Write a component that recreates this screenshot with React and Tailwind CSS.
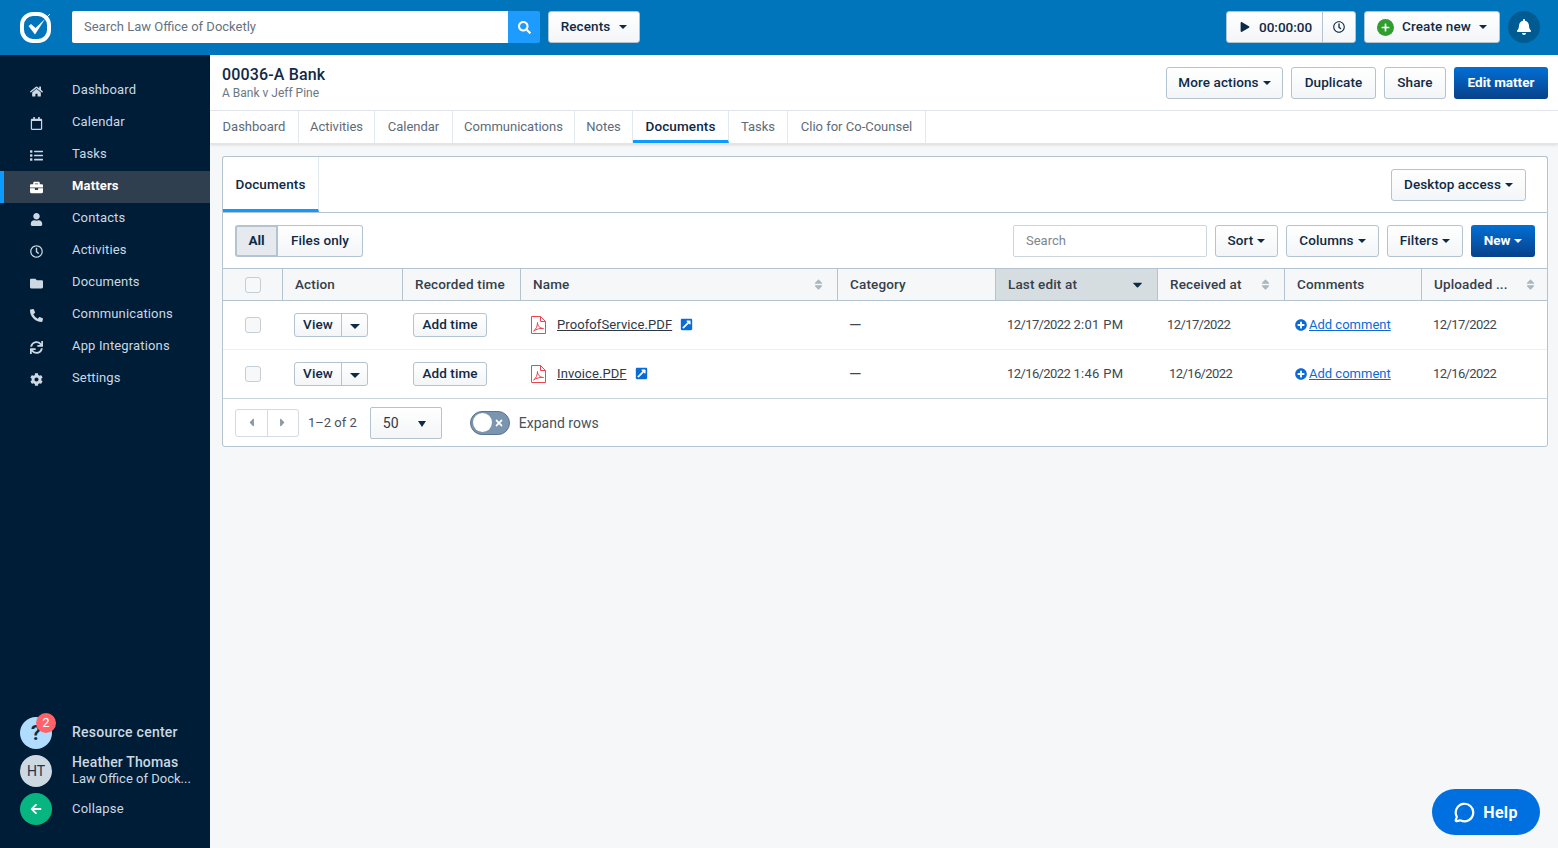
import React from 'react';
import {
  FaHome, FaRegCalendar, FaList, FaBriefcase, FaUser, FaRegClock, FaFolder, FaPhoneAlt, FaSync, FaCog,
  FaSearch, FaBell, FaPlay, FaPlus, FaArrowLeft, FaPlusCircle, FaExternalLinkSquareAlt, FaTimes,
  FaCaretLeft, FaCaretRight, FaCaretDown, FaSort,
} from 'react-icons/fa';
import { MessageCircle } from 'lucide-react';

const navItems = [
  { label: 'Dashboard', icon: FaHome },
  { label: 'Calendar', icon: FaRegCalendar },
  { label: 'Tasks', icon: FaList },
  { label: 'Matters', icon: FaBriefcase, active: true },
  { label: 'Contacts', icon: FaUser },
  { label: 'Activities', icon: FaRegClock },
  { label: 'Documents', icon: FaFolder },
  { label: 'Communications', icon: FaPhoneAlt },
  { label: 'App Integrations', icon: FaSync },
  { label: 'Settings', icon: FaCog },
];

const tabs = [
  { label: 'Dashboard', width: 'w-[89px]' },
  { label: 'Activities', width: 'w-[76px]' },
  { label: 'Calendar', width: 'w-[78px]' },
  { label: 'Communications', width: 'w-[122px]' },
  { label: 'Notes', width: 'w-[58px]' },
  { label: 'Documents', width: 'w-[96px]' },
  { label: 'Tasks', width: 'w-[59px]' },
  { label: 'Clio for Co-Counsel', width: 'w-[138px]' },
];

const rows = [
  { file: 'ProofofService.PDF', day: '12/17/2022', time: '2:01 PM', receivedPad: 'pl-[9px]' },
  { file: 'Invoice.PDF', day: '12/16/2022', time: '1:46 PM', receivedPad: 'pl-[11px]' },
];

const gridCols = 'grid grid-cols-[60px_120px_118px_317px_158px_162px_127px_137px_1fr]';
const btn = 'flex items-center justify-center rounded-[3px] border border-[#b3c3cf] bg-gradient-to-b from-white to-[#f3f5f7] pb-[2px] text-[13.5px] tracking-[0.1px] text-[#0f2a45] font-medium';
const primaryBtn = 'flex items-center justify-center rounded-[3px] bg-gradient-to-b from-[#0070d6] to-[#07418a] pb-[2px] text-[13.5px] text-white font-bold';

const Caret = ({ className = 'border-x-[4px] border-t-[4px]' }) => (
  <span className={`mt-[2px] inline-block h-0 w-0 border-x-transparent border-t-current ${className}`} />
);

const HeaderCell = ({ children, sort, active, className = '' }) => (
  <div className={`flex items-center justify-between border-r border-[#b3c3cf] px-3 text-[13.5px] font-medium tracking-[0.15px] text-[#35404a] last:border-r-0 ${active ? 'bg-[#d5dde1]' : ''} ${className}`}>
    <span className="pb-[2px]">{children}</span>
    {sort && <FaSort className="text-[13px] text-[#a9b7c0]" />}
    {active && <FaCaretDown className="text-[15px] text-[#0f2a45]" />}
  </div>
);

const Checkbox = () => (
  <span className="block h-4 w-4 rounded-[3px] border border-[#c3ced6] bg-[#f6f8f9]" />
);

const PdfIcon = () => (
  <svg width="15" height="18" viewBox="0 0 15 18" fill="none" stroke="#f0444f" strokeWidth="1" className="shrink-0">
    <path d="M0.5 0.5 H9.5 L14.5 5.5 V17.5 H0.5 Z" />
    <path d="M9.5 0.5 V5.5 H14.5" />
    <path d="M2.5 15 C5 13.5 6.5 10 6.5 6.5 C6.5 10 9 12.5 12.5 12.5 C9.5 12 5.5 13 2.5 15 Z" />
  </svg>
);

function Sidebar() {
  return (
    <aside className="flex w-[210px] shrink-0 flex-col justify-between bg-[#001d38] pb-[23px] pt-5">
      <nav>
        {navItems.map(({ label, icon: Icon, active }) => (
          <div
            key={label}
            className={`flex h-8 items-center border-l-[4px] pl-[25px] ${active ? 'border-[#0c9bff] bg-[#2f3f4f] font-bold text-white' : 'border-transparent text-[#ccd8e2]'}`}
          >
            <span className="flex w-[14px] justify-center text-[13px]">
              <Icon className={active ? 'text-white' : 'text-[#ccd8e2]'} />
            </span>
            <span className="ml-[29px] pb-[2px] tracking-[0.15px]">{label}</span>
          </div>
        ))}
      </nav>
      <div className="flex flex-col gap-[6px] pl-5 text-[#ccd8e2]">
        <div className="flex h-8 items-center">
          <div className="relative flex h-8 w-8 items-center justify-center rounded-full bg-[#afdcff] text-[20px] font-bold text-[#0f2a45]">
            ?
            <span className="absolute left-4 top-[-4px] flex h-5 w-5 items-center justify-center rounded-full bg-[#ff6369] text-[13px] font-normal text-white">2</span>
          </div>
          <span className="ml-5 pb-[2px] text-[14px] font-medium tracking-[0.25px]">Resource center</span>
        </div>
        <div className="flex h-8 items-center">
          <div className="flex h-8 w-8 items-center justify-center rounded-full bg-[#ccd8e2] text-[14px] text-[#1c3550]">HT</div>
          <div className="ml-5 pb-px leading-[16px]">
            <div className="mb-[2px] text-[14px] font-medium leading-[14px] tracking-[0.15px]">Heather Thomas</div>
            <div className="text-[13px]">Law Office of Dock...</div>
          </div>
        </div>
        <div className="flex h-8 items-center">
          <div className="flex h-8 w-8 items-center justify-center rounded-full bg-[#06b57f] text-[12px] text-white">
            <FaArrowLeft />
          </div>
          <span className="ml-5 pb-px tracking-[0.2px]">Collapse</span>
        </div>
      </div>
    </aside>
  );
}

function TopBar() {
  return (
    <header className="flex h-[55px] shrink-0 items-center bg-[#0075bc] pb-px pl-5 pr-[18px]">
      <svg width="33" height="33" viewBox="0 0 33 33" className="shrink-0">
        <rect x="2" y="3" width="27" height="27" rx="11" fill="none" stroke="white" strokeWidth="4" />
        <path d="M8.5 15 L15 23.5 L25 8 L15.5 17 L11 13 Z" fill="white" />
        <path d="M25 8 L30 3" stroke="white" strokeWidth="1" />
      </svg>
      <div className="ml-[19px] flex h-8 w-[468px]">
        <div className="flex flex-1 items-center rounded-l-[2px] bg-white pb-px pl-3 text-[#66737f]">Search Law Office of Docketly</div>
        <div className="flex w-[32px] items-center justify-center rounded-r-[2px] bg-[#1e9bff] text-[13px] text-white"><FaSearch /></div>
      </div>
      <button className={`${btn} ml-2 h-8 w-[92px] gap-[9px]`}>Recents <Caret /></button>
      <div className="ml-auto flex h-8 w-[130px] rounded-[3px] border border-[#b3c3cf] bg-gradient-to-b from-white to-[#f3f5f7] text-[#0f2a45]">
        <div className="flex flex-1 items-center border-r border-[#b3c3cf] pb-px pl-[13px] text-[13.5px] font-medium">
          <FaPlay className="mr-[9px] text-[10px]" />00:00:00
        </div>
        <div className="flex w-8 items-center justify-center text-[12px]"><FaRegClock /></div>
      </div>
      <button className={`${btn} ml-2 h-8 w-[136px] gap-[8px]`}>
        <span className="mt-[2px] flex h-[17px] w-[17px] items-center justify-center rounded-full bg-[#2f9e2f] text-[9px] text-white"><FaPlus /></span>
        Create new
        <Caret />
      </button>
      <div className="ml-2 flex h-8 w-8 items-center justify-center rounded-full bg-[#005b92] text-[16px] text-white"><FaBell /></div>
    </header>
  );
}

function MatterHeader() {
  return (
    <>
      <div className="flex h-[56px] items-center justify-between border-b border-[#e6eaee] bg-white pl-3 pr-[10px]">
        <div>
          <div className="mb-[2px] text-[16px] font-medium leading-[18px] tracking-[0.15px] text-[#0f2a45]">00036-A Bank</div>
          <div className="text-[12px] leading-[14px] text-[#6a7885]">A Bank v Jeff Pine</div>
        </div>
        <div className="flex gap-2">
          <button className={`${btn} h-8 w-[117px] gap-1`}>More actions <Caret /></button>
          <button className={`${btn} h-8 w-[85px]`}>Duplicate</button>
          <button className={`${btn} h-8 w-[62px]`}>Share</button>
          <button className={`${primaryBtn} h-8 w-[94px]`}>Edit matter</button>
        </div>
      </div>
      <div className="flex h-[33px] border-b border-[#dfe5e9] bg-white shadow-[0_1px_3px_rgba(0,0,0,0.12)]">
        {tabs.map(({ label, width }) => (
          <div
            key={label}
            className={`flex items-center justify-center border-r border-[#e3e8ec] ${width} ${label === 'Documents' ? 'border-b-[3px] border-b-[#0c9bff] pt-px text-[13.5px] font-medium tracking-[0.1px] text-[#0f2a45]' : 'pb-px text-[#5d6b78]'}`}
          >
            {label}
          </div>
        ))}
      </div>
    </>
  );
}

function DocumentsTable() {
  return (
    <div className="rounded-b-[3px] border border-[#b3c3cf] bg-white">
      <div className="flex h-[55px] items-center justify-between pl-3 pr-3">
        <div className="flex h-8 text-[13.5px]">
          <button className="w-[43px] rounded-l-[3px] border-2 border-[#b3c3cf] bg-[#e6eaee] pb-[2px] font-bold text-[#0f2a45]">All</button>
          <button className="w-[85px] rounded-r-[3px] border border-l-0 border-[#b3c3cf] bg-gradient-to-b from-white to-[#f3f5f7] pb-[2px] font-medium tracking-[0.1px] text-[#0f2a45]">Files only</button>
        </div>
        <div className="flex items-center gap-2">
          <div className="flex h-8 w-[194px] items-center rounded-[2px] border border-[#ccd6dd] pl-3 text-[#7c8791]">Search</div>
          <button className={`${btn} h-8 w-[63px] gap-1`}>Sort <Caret /></button>
          <button className={`${btn} h-8 w-[93px] gap-1`}>Columns <Caret /></button>
          <button className={`${btn} h-8 w-[76px] gap-1`}>Filters <Caret /></button>
          <button className={`${primaryBtn} h-8 w-[64px] gap-1`}>New <Caret /></button>
        </div>
      </div>
      <div className={`${gridCols} h-[33px] border-y border-[#b3c3cf] bg-[#f5f7f9]`}>
        <div className="flex items-center justify-center border-r border-[#b3c3cf]"><Checkbox /></div>
        <HeaderCell>Action</HeaderCell>
        <HeaderCell>Recorded time</HeaderCell>
        <HeaderCell sort>Name</HeaderCell>
        <HeaderCell>Category</HeaderCell>
        <HeaderCell active>Last edit at</HeaderCell>
        <HeaderCell sort>Received at</HeaderCell>
        <HeaderCell>Comments</HeaderCell>
        <HeaderCell sort className="pr-[10px]">Uploaded ...</HeaderCell>
      </div>
      {rows.map((r, i) => (
        <div key={r.file} className={`${gridCols} h-[49px] items-center border-b ${i === 1 ? 'border-[#c9d4db]' : 'border-[#eceff2]'} text-[#3c4852]`}>
          <div className="flex justify-center"><Checkbox /></div>
          <div className="pl-[11px]">
            <div className={`${btn} h-6 w-[74px] !justify-start !pb-0`}>
              <span className="flex h-full w-[47px] items-center justify-center border-r border-[#b3c3cf] pb-[2px]">View</span>
              <span className="flex flex-1 justify-center"><Caret className="border-x-[5px] border-t-[5px]" /></span>
            </div>
          </div>
          <div className="pl-[10px]">
            <div className={`${btn} h-6 w-[74px]`}>Add time</div>
          </div>
          <div className="flex items-center pb-px pl-[10px]">
            <PdfIcon />
            <span className="ml-[11px] tracking-[0.1px] text-[#2d3a46] underline">{r.file}</span>
            <FaExternalLinkSquareAlt className="ml-2 text-[13px] text-[#0a6bd6]" />
          </div>
          <div className="pl-[11px] pt-[2px] text-[16px]">—</div>
          <div className="pb-px pl-[11px]">
            <span className="tracking-[-0.6px]">{r.day}</span> <span className="tracking-[0.3px]">{r.time}</span>
          </div>
          <div className={`pb-px ${r.receivedPad} tracking-[-0.6px]`}>{r.day}</div>
          <div className="flex items-center pb-px pl-[10px] text-[#0a6bd6]">
            <FaPlusCircle className="text-[12px]" />
            <span className="ml-[2px] underline">Add comment</span>
          </div>
          <div className="pb-px pl-[11px] tracking-[-0.6px]">{r.day}</div>
        </div>
      ))}
      <div className="flex h-[47px] items-center pl-3 text-[#45525d]">
        <div className="flex h-7 w-[64px] rounded-[3px] border border-[#d3dbe1] text-[#8b98a3]">
          <span className="flex flex-1 items-center justify-center border-r border-[#d3dbe1] text-[13px]"><FaCaretLeft /></span>
          <span className="flex flex-1 items-center justify-center text-[13px]"><FaCaretRight /></span>
        </div>
        <span className="ml-[9px]">1–2 of 2</span>
        <div className="ml-[13px] flex h-8 w-[72px] items-center justify-between rounded-[2px] border border-[#b3c3cf] bg-gradient-to-b from-white to-[#f3f5f7] pl-3 pr-[15px] text-[14px] text-[#2d3a46]">
          50 <Caret className="border-x-[4px] border-t-[6px] text-[#0f2a45]" />
        </div>
        <div className="ml-7 flex h-6 w-10 items-center justify-between rounded-full border border-[#5b7590] bg-[#7b95b0] pl-[2px] pr-[5px]">
          <span className="h-[19px] w-[19px] rounded-full bg-white" />
          <FaTimes className="text-[10px] text-white" />
        </div>
        <span className="ml-[9px] text-[14px]">Expand rows</span>
      </div>
    </div>
  );
}

export default function App() {
  return (
    <div className="flex h-[848px] w-[1558px] flex-col overflow-hidden bg-[#f5f7f9] text-[13px] leading-5 [font-family:Roboto,'Liberation_Sans',sans-serif]">
      <TopBar />
      <div className="flex min-h-0 flex-1">
        <Sidebar />
        <main className="relative min-w-0 flex-1">
          <MatterHeader />
          <div className="px-[10px] pl-3 pt-3">
            <div className="flex h-[56px] items-center justify-between rounded-t-[3px] border border-b-0 border-[#b3c3cf] bg-white pr-[21px]">
              <div className="flex h-full w-[96px] items-center justify-center border-r border-b-[3px] border-r-[#e3e8ec] border-b-[#0c9bff] pt-[2px] text-[13.5px] font-medium tracking-[0.1px] text-[#0f2a45]">Documents</div>
              <button className={`${btn} h-8 w-[135px] gap-1`}>Desktop access <Caret /></button>
            </div>
            <DocumentsTable />
          </div>
          <div className="absolute bottom-[13px] right-[18px] flex h-[46px] w-[108px] items-center justify-center gap-2 rounded-full bg-[#006fdf] pt-px text-[16px] font-bold tracking-[0.3px] text-white">
            <MessageCircle size={21} strokeWidth={2.5} /> Help
          </div>
        </main>
      </div>
    </div>
  );
}
